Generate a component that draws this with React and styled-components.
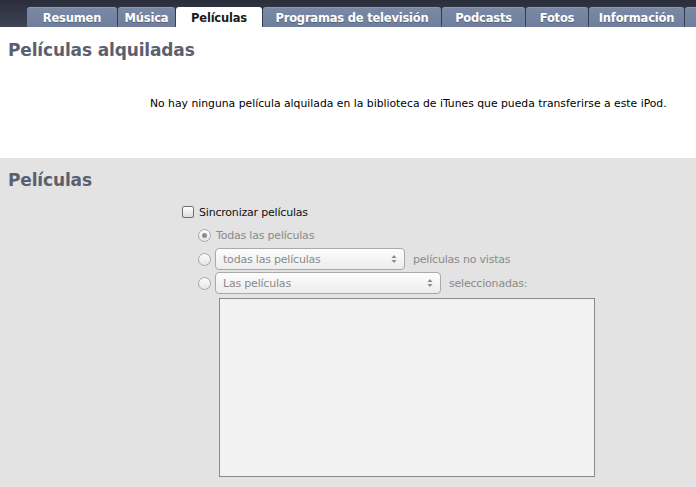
import React from "react";
import styled, { createGlobalStyle } from "styled-components";

const Global = createGlobalStyle`
  html, body { margin: 0; padding: 0; }
  body { width: 696px; height: 487px; overflow: hidden; background: #e3e3e3; font-family: "DejaVu Sans", Tahoma, sans-serif; }
`;

const Page = styled.div`
  display: flex;
  flex-direction: column;
  width: 696px;
  height: 487px;
`;

const TabBar = styled.div`
  height: 27px;
  background: linear-gradient(#2a2e3b, #3f4456);
  display: flex;
  align-items: flex-end;
  padding-left: 27px;
  gap: 1px;
  overflow: hidden;
`;

const Tab = styled.div`
  height: 20px;
  width: ${(p) => p.$w}px;
  flex: none;
  box-sizing: border-box;
  border-radius: 3px 3px 0 0;
  background: ${(p) => (p.$active ? "#ffffff" : "linear-gradient(#7a89a6, #6f7e9b)")};
  color: ${(p) => (p.$active ? "#1a1a1a" : "#ffffff")};
  font-family: "DejaVu Sans", Tahoma, sans-serif;
  font-weight: bold;
  font-size: 11.5px;
  display: flex;
  align-items: center;
  justify-content: center;
  padding-top: 1px;
  letter-spacing: -0.2px;
  text-shadow: ${(p) => (p.$active ? "none" : "0 1px 0 rgba(40,50,70,0.4)")};
  box-shadow: ${(p) => (p.$active ? "none" : "inset 0 1px 0 rgba(255,255,255,0.15)")};
`;

const WhiteSection = styled.section`
  background: #ffffff;
  height: 131px;
  flex: none;
  display: flex;
  flex-direction: column;
`;

const Heading = styled.h2`
  margin: 0;
  font-family: "DejaVu Sans", Tahoma, sans-serif;
  font-weight: bold;
  font-size: 17px;
  color: #5a6070;
  padding: ${(p) => p.$pad};
  letter-spacing: -0.15px;
`;

const Message = styled.p`
  margin: 0;
  padding: 37px 0 0 150px;
  font-family: "DejaVu Sans", Tahoma, sans-serif;
  font-size: 10.8px;
  color: #000;
`;

const GraySection = styled.section`
  flex: 1;
  background: #e3e3e3;
  display: flex;
  flex-direction: column;
`;

const Options = styled.div`
  padding: 11px 0 0 182px;
  display: flex;
  flex-direction: column;
`;

const Row = styled.div`
  display: flex;
  align-items: center;
  height: ${(p) => p.$h}px;
  padding-left: ${(p) => p.$indent || 0}px;
  gap: ${(p) => p.$gap || 5}px;
  font-family: "DejaVu Sans", Tahoma, sans-serif;
  font-size: 11px;
  letter-spacing: -0.2px;
  color: ${(p) => (p.$dim ? "#8a8a8a" : "#111")};
`;

const Checkbox = styled.span`
  width: 12px;
  height: 12px;
  box-sizing: border-box;
  border: 1px solid #6f6f6f;
  border-radius: 2px;
  background: linear-gradient(#ffffff, #dcdcdc);
  flex: none;
`;

const Radio = styled.span`
  width: 13px;
  height: 13px;
  box-sizing: border-box;
  border: 1px solid #a8a8a8;
  border-radius: 50%;
  background: linear-gradient(#fbfbfb, #e6e6e6);
  flex: none;
  display: flex;
  align-items: center;
  justify-content: center;
  &::after {
    content: "";
    display: ${(p) => (p.$on ? "block" : "none")};
    width: 5px;
    height: 5px;
    border-radius: 50%;
    background: #8c8c8c;
  }
`;

const Select = styled.div`
  width: ${(p) => p.$w}px;
  height: 22px;
  box-sizing: border-box;
  border: 1px solid #a9a9a9;
  border-radius: 4px;
  background: linear-gradient(#fdfdfd, #ececec);
  display: flex;
  align-items: center;
  justify-content: space-between;
  padding: 0 7px 0 7px;
  color: #8a8a8a;
  flex: none;
`;

const Arrows = styled.svg`
  width: 6px;
  height: 10px;
  flex: none;
`;

const Label = styled.span`
  margin-left: ${(p) => p.$ml || 0}px;
`;

const ListBox = styled.div`
  margin: 3px 0 0 37px;
  width: 376px;
  height: 179px;
  box-sizing: border-box;
  border: 1px solid #8a8a8a;
  background: #f2f2f2;
`;

const tabs = [
  ["Resumen", 90],
  ["Música", 57],
  ["Películas", 86, true],
  ["Programas de televisión", 178],
  ["Podcasts", 83],
  ["Fotos", 62],
  ["Información", 95],
  ["", 40],
];

function SelectBox({ w, label }) {
  return (
    <Select $w={w}>
      <span>{label}</span>
      <Arrows viewBox="0 0 6 10">
        <path d="M3 1 L5.5 4 H0.5 Z" fill="#8a8a8a" />
        <path d="M3 9 L5.5 6 H0.5 Z" fill="#8a8a8a" />
      </Arrows>
    </Select>
  );
}

export default function App() {
  return (
    <Page>
      <Global />
      <TabBar>
        {tabs.map(([t, w, a], i) => (
          <Tab key={i} $w={w} $active={a}>
            {t}
          </Tab>
        ))}
      </TabBar>
      <WhiteSection>
        <Heading $pad="13px 0 0 8px">Películas alquiladas</Heading>
        <Message>
          No hay ninguna película alquilada en la biblioteca de iTunes que pueda transferirse a este iPod.
        </Message>
      </WhiteSection>
      <GraySection>
        <Heading $pad="12px 0 0 8px">Películas</Heading>
        <Options>
          <Row $h={22} $gap={5}>
            <Checkbox />
            <Label>Sincronizar películas</Label>
          </Row>
          <Row $h={24} $indent={16} $dim>
            <Radio $on />
            <Label>Todas las películas</Label>
          </Row>
          <Row $h={24} $indent={16} $gap={4} $dim>
            <Radio />
            <SelectBox w={190} label="todas las películas" />
            <Label $ml={4}>películas no vistas</Label>
          </Row>
          <Row $h={24} $indent={16} $gap={4} $dim>
            <Radio />
            <SelectBox w={226} label="Las películas" />
            <Label $ml={4}>seleccionadas:</Label>
          </Row>
          <ListBox />
        </Options>
      </GraySection>
    </Page>
  );
}
